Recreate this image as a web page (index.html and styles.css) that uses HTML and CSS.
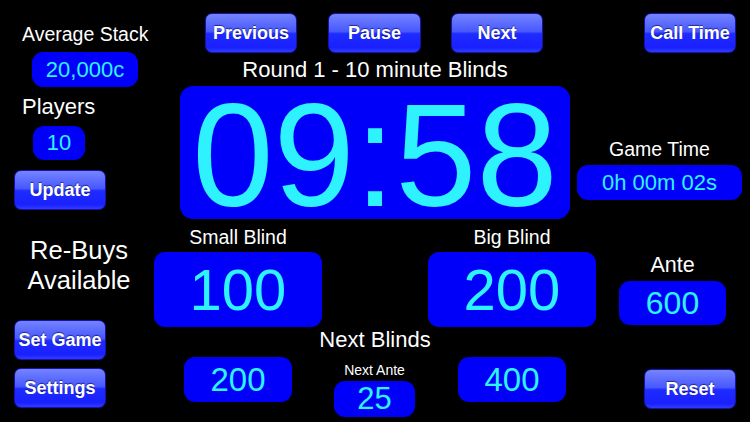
FILE: index.html
```html
<!DOCTYPE html>
<html lang="en">
<head>
  <meta charset="UTF-8">
  <meta name="viewport" content="width=device-width, initial-scale=1.0">
  <title>Blinds Timer</title>
  <link rel="stylesheet" href="styles.css">
</head>
<body>
  <div class="screen">
    <div class="side">
      <div class="label avg-label">Average Stack</div>
      <div class="box avg-box">20,000c</div>
      <div class="label players-label">Players</div>
      <div class="box players-box">10</div>
      <button class="btn update-btn">Update</button>
      <div class="rebuys">Re-Buys<br>Available</div>
      <button class="btn setgame-btn">Set Game</button>
      <button class="btn settings-btn">Settings</button>
    </div>

    <div class="main">
      <div class="top-row">
        <button class="btn prev-btn">Previous</button>
        <button class="btn pause-btn">Pause</button>
        <button class="btn next-btn">Next</button>
        <button class="btn call-btn">Call Time</button>
      </div>

      <div class="round">Round 1 - 10 minute Blinds</div>

      <div class="timer-row">
        <div class="timer">09:58</div>
        <div class="game-time">
          <div class="label gt-label">Game Time</div>
          <div class="box gt-box">0h 00m 02s</div>
        </div>
      </div>

      <div class="blinds-row">
        <div class="blind">
          <div class="label blind-label">Small Blind</div>
          <div class="box blind-box">100</div>
        </div>
        <div class="blind big">
          <div class="label blind-label">Big Blind</div>
          <div class="box blind-box">200</div>
        </div>
        <div class="ante">
          <div class="label ante-label">Ante</div>
          <div class="box ante-box">600</div>
        </div>
      </div>

      <div class="next-label">Next Blinds</div>

      <div class="bottom-row">
        <div class="box next-box">200</div>
        <div class="next-ante">
          <div class="label na-label">Next Ante</div>
          <div class="box na-box">25</div>
        </div>
        <div class="box next-box next-big">400</div>
        <button class="btn reset-btn">Reset</button>
      </div>
    </div>
  </div>
</body>
</html>
```

FILE: styles.css
```css
* {
  margin: 0;
  padding: 0;
  box-sizing: border-box;
  font-family: 'Liberation Sans', Arial, sans-serif;
}

body {
  background: #000;
  width: 750px;
  height: 422px;
  overflow: hidden;
}

.screen {
  display: flex;
  width: 750px;
  height: 422px;
}

.label {
  color: #fff;
  white-space: nowrap;
}

.box {
  background-color: #0000fa;
  color: #2ef3ff;
  border-radius: 11px;
  display: flex;
  justify-content: center;
  align-items: center;
  white-space: nowrap;
}

/* glossy buttons */
.btn {
  width: 92px;
  height: 40px;
  border: 1px solid #1414a8;
  border-radius: 7px;
  background: linear-gradient(to bottom, #7484ff 0%, #4858ff 46%, #1e2cff 52%, #1a20ff 88%, #2f3cff 100%);
  color: #fff;
  font-size: 18px;
  font-weight: bold;
  text-shadow: 0 -1px 1px rgba(0, 0, 60, 0.6);
  display: block;
}

/* left column */
.side {
  width: 150px;
  flex-shrink: 0;
}

.avg-label {
  font-size: 19.5px;
  line-height: 24px;
  margin: 22px 0 0 22px;
}

.avg-box {
  width: 106px;
  height: 35px;
  margin: 6px 0 0 32px;
  font-size: 22px;
}

.players-label {
  font-size: 22px;
  line-height: 26px;
  margin: 7px 0 0 22px;
}

.players-box {
  width: 52px;
  height: 34px;
  margin: 6px 0 0 33px;
  font-size: 22px;
}

.update-btn {
  margin: 10px 0 0 14px;
}

.rebuys {
  width: 158px;
  color: #fff;
  text-align: center;
  font-size: 25.5px;
  line-height: 30px;
  margin-top: 25px;
}

.setgame-btn {
  margin: 25px 0 0 14px;
}

.settings-btn {
  margin: 8px 0 0 14px;
}

/* main area */
.main {
  width: 600px;
  display: flex;
  flex-direction: column;
}

.top-row {
  display: flex;
  padding: 13px 0 0 55px;
}

.pause-btn {
  margin-left: 31px;
  width: 93px;
}

.next-btn {
  margin-left: 30px;
}

.call-btn {
  margin-left: 101px;
}

.round,
.next-label {
  width: 450px;
  text-align: center;
  color: #fff;
  font-size: 22px;
  line-height: 26px;
}

.round {
  margin-top: 4px;
}

.timer-row {
  display: flex;
  margin-top: 3px;
}

.timer {
  width: 390px;
  height: 133px;
  margin-left: 30px;
  padding-top: 7px;
  background-color: #0000fa;
  border-radius: 13px;
  color: #2ef3ff;
  font-size: 146px;
  line-height: 126px;
  text-align: center;
}

.game-time {
  width: 165px;
  margin: 51px 0 0 7px;
  display: flex;
  flex-direction: column;
  align-items: center;
}

.gt-label {
  font-size: 19.5px;
  line-height: 24px;
}

.gt-box {
  width: 165px;
  height: 35px;
  margin-top: 4px;
  font-size: 22px;
}

.blinds-row {
  display: flex;
  padding-left: 4px;
  margin-top: 7px;
}

.blind {
  width: 168px;
  display: flex;
  flex-direction: column;
  align-items: center;
}

.blind.big {
  margin-left: 106px;
}

.blind-label {
  font-size: 19.5px;
  line-height: 23px;
}

.blind-box {
  width: 168px;
  height: 75px;
  margin-top: 3px;
  font-size: 58px;
}

.ante {
  width: 107px;
  margin: 27px 0 0 23px;
  display: flex;
  flex-direction: column;
  align-items: center;
}

.ante-label {
  font-size: 21.5px;
  line-height: 25px;
}

.ante-box {
  width: 107px;
  height: 44px;
  margin-top: 3px;
  font-size: 32px;
}

.next-label {
  margin-top: 0;
}

.bottom-row {
  display: flex;
  align-items: flex-start;
  padding-left: 34px;
  margin-top: 4px;
}

.next-box {
  width: 108px;
  height: 45px;
  font-size: 33px;
}

.next-ante {
  width: 81px;
  margin-left: 42px;
  display: flex;
  flex-direction: column;
  align-items: center;
}

.na-label {
  font-size: 14px;
  line-height: 17px;
  margin-top: 5px;
}

.na-box {
  width: 81px;
  height: 36px;
  margin-top: 2px;
  font-size: 31px;
}

.next-big {
  margin-left: 43px;
}

.reset-btn {
  margin: 12px 0 0 78px;
}
```
